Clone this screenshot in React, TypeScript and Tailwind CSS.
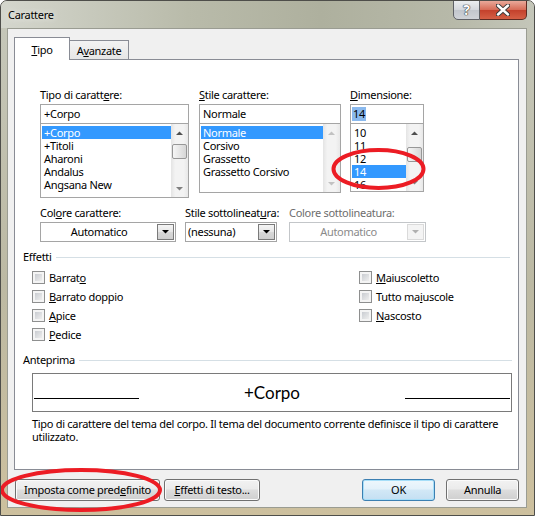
import React from 'react';

// small arrow used by scrollbars and drop-downs
function Tri({ up, color = '#000' }: { up?: boolean; color?: string }) {
  return (
    <svg width="7" height="4" viewBox="0 0 7 4">
      <path d={up ? 'M0 4H7L3.5 0.5Z' : 'M0 0H7L3.5 3.5Z'} fill={color} />
    </svg>
  );
}

function ScrollBar({ thumbClass, disabled }: { thumbClass?: string; disabled?: boolean }) {
  const c = disabled ? '#c2c2c2' : '#505050';
  return (
    <div className="w-[17px] h-full flex flex-col bg-[linear-gradient(to_right,#e4e4e4,#f3f3f3_25%,#f3f3f3_75%,#e8e8e8)]">
      <div className="h-[17px] flex items-center justify-center">
        <Tri up color={c} />
      </div>
      <div className="flex-1">
        {thumbClass && (
          <div
            className={`${thumbClass} mx-[1px] h-[15px] rounded-[2px] border border-[#979797] bg-[linear-gradient(to_right,#f6f6f6,#e6e6e6_50%,#d6d6d6)]`}
          />
        )}
      </div>
      <div className="h-[17px] flex items-center justify-center">
        <Tri color={disabled ? '#c2c2c2' : '#808080'} />
      </div>
    </div>
  );
}

function ListBox({
  items,
  sel,
  hClass,
  thumbClass,
  disabled,
}: {
  items: string[];
  sel: number;
  hClass: string;
  thumbClass?: string;
  disabled?: boolean;
}) {
  return (
    <div className={`${hClass} -mt-px flex border border-[#a5a5a5] bg-white`}>
      <div className="flex-1 overflow-hidden pt-[2px] pl-px">
        {items.map((it, i) => (
          <div
            key={it}
            className={`h-[13px] leading-[13px] pl-[2px] whitespace-nowrap ${i === sel ? 'bg-[#3399ff] text-white' : 'text-black'}`}
          >
            {it}
          </div>
        ))}
      </div>
      <ScrollBar thumbClass={thumbClass} disabled={disabled} />
    </div>
  );
}

function Combo({
  text,
  wClass,
  center,
  disabled,
}: {
  text: string;
  wClass: string;
  center?: boolean;
  disabled?: boolean;
}) {
  return (
    <div
      className={`${wClass} h-[20px] flex border ${disabled ? 'border-[#c3c6c9] text-[#8a8a8a]' : 'border-[#a5a5a5] text-black'} bg-white`}
    >
      <div className={`flex-1 leading-[18px] ${center ? 'text-center' : 'pl-[2px]'}`}>{text}</div>
      <div
        className={`w-[17px] my-px mr-px flex items-center justify-center border ${disabled ? 'border-[#dadada] bg-[#f4f4f4]' : 'border-[#7a7a7a] bg-[linear-gradient(to_bottom,#f4f4f4,#e6e6e6_50%,#d8d8d8_50%,#cfcfcf)]'}`}
      >
        <Tri color={disabled ? '#b0b0b0' : '#000'} />
      </div>
    </div>
  );
}

function Check({ children }: { children: React.ReactNode }) {
  return (
    <div className="h-[19px] flex items-center gap-[4px]">
      <div className="w-[13px] h-[13px] border border-[#8e8f8f] bg-[#f4f4f4] p-[2px]">
        <div className="w-full h-full bg-[linear-gradient(135deg,#c9ccd1,#eeeeee)]" />
      </div>
      <span className="leading-[14px]">{children}</span>
    </div>
  );
}

function Btn({ children, wClass, def }: { children: React.ReactNode; wClass: string; def?: boolean }) {
  return (
    <div
      className={`${wClass} h-[22px] rounded-[3px] border flex items-center justify-center text-black ${def ? 'border-[#3c7fb1] shadow-[inset_0_0_0_1px_#a6def8] bg-[linear-gradient(to_bottom,#eef7fc,#e3f1fa_45%,#d2e8f6_50%,#c4dff2)]' : 'border-[#707070] shadow-[inset_0_0_0_1px_#fbfbfb] bg-[linear-gradient(to_bottom,#f2f2f2,#ebebeb_45%,#dddddd_50%,#cfcfcf)]'}`}
    >
      {children}
    </div>
  );
}

function Heading({ children, mrClass }: { children: React.ReactNode; mrClass: string }) {
  return (
    <div className={`h-[14px] flex items-center pl-[8px] ${mrClass}`}>
      <span className="leading-[14px]">{children}</span>
      <div className="flex-1 ml-[4px] h-px bg-[#d5dfe5]" />
    </div>
  );
}

export default function App() {
  return (
    <div className="relative w-[535px] h-[516px] overflow-hidden rounded-t-[7px] border border-[#4e4e4a] bg-[linear-gradient(to_bottom,#c6c8bb,#bcb9a3_55%,#cdc09e)] text-[11px] text-black [font-family:'Noto_Sans',sans-serif] tracking-[-0.3px]">
      {/* title bar */}
      <div className="h-[27px] flex items-start bg-[linear-gradient(to_right,#d4d6cd,#b9bbaa_35%,#aeb09e_60%,#b7b9a9_85%,#c4c6b9)]">
        <span className="pl-[7px] pt-[7px] leading-[14px] [text-shadow:0_0_6px_#ffffff]">Carattere</span>
        <div className="ml-auto mr-[7px] -mt-px flex">
          <div className="w-[27px] h-[20px] rounded-bl-[5px] border border-[#5f6166] bg-[linear-gradient(to_bottom,#eceef0,#d4d7dc_50%,#c2c6cc_50%,#d0d3d8)] flex items-center justify-center">
            <span className="text-[14px] font-bold leading-none text-white [text-shadow:0_0_1px_#333,0_0_1px_#333,0_0_1px_#333]">?</span>
          </div>
          <div className="w-[47px] h-[20px] rounded-br-[5px] border border-l-0 border-[#5e2a22] bg-[linear-gradient(to_bottom,#e9a99a,#d66a55_50%,#c3402b_50%,#d55f45)] flex items-center justify-center">
            <svg width="14" height="12" viewBox="0 0 14 12">
              <path d="M2 1.5L12 10.5M12 1.5L2 10.5" stroke="#3b3b3b" strokeWidth="4.4" strokeLinecap="round" />
              <path d="M2 1.5L12 10.5M12 1.5L2 10.5" stroke="#ffffff" strokeWidth="2.4" strokeLinecap="round" />
            </svg>
          </div>
        </div>
      </div>

      {/* client area */}
      <div className="ml-[6px] w-[520px] h-[480px] border border-[#9a9c92] bg-[#f0f0f0] flex flex-col pl-[6px]">
        {/* tabs */}
        <div className="mt-[8px] flex items-end">
          <div className="relative z-10 w-[56px] h-[23px] -mb-px border border-b-0 border-[#898c95] bg-white text-center pt-[5px] leading-[14px]">
            <u>T</u>ipo
          </div>
          <div className="w-[59px] h-[19px] border border-l-0 border-b-0 border-[#898c95] bg-[linear-gradient(to_bottom,#f3f3f3,#e6e6e6)] text-center pt-[3px] leading-[14px]">
            A<u>v</u>anzate
          </div>
        </div>

        {/* tab panel */}
        <div className="w-[505px] h-[411px] border border-[#898c95] bg-white pt-[28px]">
          <div className="flex items-start pl-[25px]">
            <div className="w-[149px]">
              <div className="h-[14px] leading-[14px] mb-[2px]">
                Tipo di caratt<u>e</u>re:
              </div>
              <div className="h-[20px] border border-[#a5a5a5] pl-[3px] leading-[18px]">+Corpo</div>
              <ListBox
                items={['+Corpo', '+Titoli', 'Aharoni', 'Andalus', 'Angsana New']}
                sel={0}
                hClass="h-[75px]"
                thumbClass="mt-[3px]"
              />
            </div>
            <div className="w-[142px] ml-[10px]">
              <div className="h-[14px] leading-[14px] mb-[2px]">
                <u>S</u>tile carattere:
              </div>
              <div className="h-[20px] border border-[#a5a5a5] pl-[3px] leading-[18px]">Normale</div>
              <ListBox
                items={['Normale', 'Corsivo', 'Grassetto', 'Grassetto Corsivo']}
                sel={0}
                hClass="h-[70px]"
                disabled
              />
            </div>
            <div className="w-[74px] ml-[9px]">
              <div className="h-[14px] leading-[14px] mb-[2px]">
                <u>D</u>imensione:
              </div>
              <div className="h-[20px] border border-[#a5a5a5] pl-px flex items-center">
                <span className="h-[14px] leading-[14px] px-px bg-[#8ab9ee]">14</span>
              </div>
              <ListBox items={['10', '11', '12', '14', '16']} sel={3} hClass="h-[69px]" thumbClass="mt-[6px]" />
            </div>
          </div>

          <div className="flex items-start pl-[25px] mt-[8px]">
            <div>
              <div className="h-[14px] leading-[14px] mb-[2px]">
                Col<u>o</u>re carattere:
              </div>
              <Combo text="Automatico" wClass="w-[136px]" center />
            </div>
            <div className="ml-[9px]">
              <div className="h-[14px] leading-[14px] mb-[2px] whitespace-nowrap">
                Stile sottolineat<u>u</u>ra:
              </div>
              <Combo text="(nessuna)" wClass="w-[92px]" />
            </div>
            <div className="ml-[10px]">
              <div className="h-[14px] leading-[14px] mb-[2px] text-[#6d6d6d]">Colore sottolineatura:</div>
              <Combo text="Automatico" wClass="w-[137px]" center disabled />
            </div>
          </div>

          <div className="mt-[8px]">
            <Heading mrClass="mr-[8px]">Effetti</Heading>
          </div>

          <div className="mt-[4px] flex pl-[17px]">
            <div className="w-[327px]">
              <Check>
                Barrat<u>o</u>
              </Check>
              <Check>
                <u>B</u>arrato doppio
              </Check>
              <Check>
                <u>A</u>pice
              </Check>
              <Check>
                <u>P</u>edice
              </Check>
            </div>
            <div>
              <Check>
                <u>M</u>aiuscoletto
              </Check>
              <Check>
                Tutto ma<u>i</u>uscole
              </Check>
              <Check>
                <u>N</u>ascosto
              </Check>
            </div>
          </div>

          <div className="mt-[9px]">
            <Heading mrClass="mr-[6px]">Anteprima</Heading>
          </div>

          <div className="mt-[6px] ml-[17px] w-[480px] h-[39px] border border-[#7a7a7a] flex items-center justify-between px-px">
            <div className="w-[105px] self-end mb-[12px] border-b border-black" />
            <span className="text-[17px] tracking-normal [font-family:Lato,sans-serif]">+Corpo</span>
            <div className="w-[105px] self-end mb-[12px] border-b border-black" />
          </div>

          <div className="mt-[5px] pl-[17px] pr-[4px] leading-[13px]">
            Tipo di carattere del tema del corpo. Il tema del documento corrente definisce il tipo di carattere utilizzato.
          </div>
        </div>

        {/* bottom buttons */}
        <div className="mt-[9px] flex items-center pl-px pr-[7px]">
          <Btn wClass="w-[145px]">
            Imposta come pred<u>e</u>finito
          </Btn>
          <div className="ml-[4px]">
            <Btn wClass="w-[96px]">
              <span>
                <u>E</u>ffetti di testo...
              </span>
            </Btn>
          </div>
          <div className="ml-auto">
            <Btn wClass="w-[73px]" def>
              OK
            </Btn>
          </div>
          <div className="ml-[11px]">
            <Btn wClass="w-[73px]">Annulla</Btn>
          </div>
        </div>
      </div>

      {/* red annotation ellipses drawn over the dialog */}
      <svg className="absolute -left-px -top-px pointer-events-none" width="535" height="516" viewBox="0 0 535 516">
        <ellipse cx="378.5" cy="169" rx="45" ry="19" fill="none" stroke="#ec1c24" strokeWidth="4" />
        <ellipse cx="81" cy="490" rx="79" ry="20" fill="none" stroke="#ec1c24" strokeWidth="4" />
      </svg>
    </div>
  );
}
